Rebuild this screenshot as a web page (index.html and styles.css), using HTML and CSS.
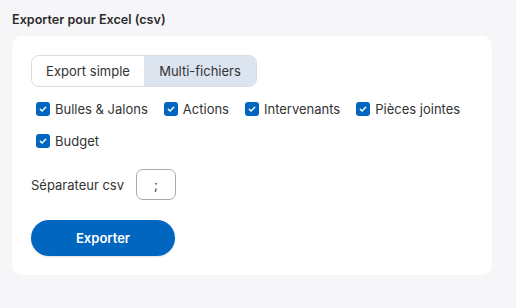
FILE: index.html
```html
<!DOCTYPE html>
<html lang="fr">
<head>
<meta charset="utf-8">
<link rel="stylesheet" href="styles.css">
</head>
<body>
<div class="page">
  <h2 class="title">Exporter pour Excel (csv)</h2>
  <div class="card">
    <div class="segmented">
      <button class="seg first">Export simple</button>
      <button class="seg active">Multi-fichiers</button>
    </div>
    <div class="checks">
      <label class="check"><span class="box"><svg viewBox="0 0 14 14" width="14" height="14"><path d="M4.3 7.2 L6.1 9 L9.7 5.2" fill="none" stroke="#fff" stroke-width="1.4" stroke-linecap="round" stroke-linejoin="round"/></svg></span>Bulles &amp; Jalons</label>
      <label class="check"><span class="box"><svg viewBox="0 0 14 14" width="14" height="14"><path d="M4.3 7.2 L6.1 9 L9.7 5.2" fill="none" stroke="#fff" stroke-width="1.4" stroke-linecap="round" stroke-linejoin="round"/></svg></span>Actions</label>
      <label class="check"><span class="box"><svg viewBox="0 0 14 14" width="14" height="14"><path d="M4.3 7.2 L6.1 9 L9.7 5.2" fill="none" stroke="#fff" stroke-width="1.4" stroke-linecap="round" stroke-linejoin="round"/></svg></span>Intervenants</label>
      <label class="check"><span class="box"><svg viewBox="0 0 14 14" width="14" height="14"><path d="M4.3 7.2 L6.1 9 L9.7 5.2" fill="none" stroke="#fff" stroke-width="1.4" stroke-linecap="round" stroke-linejoin="round"/></svg></span>Pièces jointes</label>
      <label class="check"><span class="box"><svg viewBox="0 0 14 14" width="14" height="14"><path d="M4.3 7.2 L6.1 9 L9.7 5.2" fill="none" stroke="#fff" stroke-width="1.4" stroke-linecap="round" stroke-linejoin="round"/></svg></span>Budget</label>
    </div>
    <div class="sep-row">
      <span class="sep-label">Séparateur csv</span>
      <span class="sep-input">;</span>
    </div>
    <button class="export">Exporter</button>
  </div>
</div>
</body>
</html>
```
FILE: styles.css
```css
* { box-sizing: border-box; }
html, body { margin: 0; padding: 0; }
body {
  background: #f6f6f8;
  font-family: Inter, "Noto Sans", sans-serif;
  color: #333;
  width: 516px;
  height: 308px;
  overflow: hidden;
}
.page { padding: 12px 24px 0 12px; }
.title {
  margin: 0 0 9px 0;
  font-size: 12.6px;
  font-weight: 600;
  line-height: 15px;
  color: #2b2b2b;
}
.card {
  width: 480px;
  height: 239px;
  background: #fff;
  border-radius: 10px;
  padding: 19px 19px;
}
.segmented {
  display: inline-flex;
  height: 32px;
  border: 1px solid #d9dde3;
  border-radius: 8px;
  overflow: hidden;
}
.seg {
  font-family: inherit;
  font-size: 13px;
  color: #333;
  background: #fff;
  border: none;
  padding: 0;
  margin: 0;
  height: 100%;
  text-align: center;
}
.seg.first { width: 112px; }
.seg.active { width: 112px; background: #dce4f0; }
.checks {
  display: flex;
  flex-wrap: wrap;
  column-gap: 16px;
  row-gap: 18px;
  margin-top: 15px;
  padding-left: 5px;
  width: 450px;
}
.check {
  display: flex;
  align-items: center;
  gap: 5px;
  font-size: 13px;
  line-height: 14px;
  color: #333;
}
.box {
  width: 14px;
  height: 14px;
  background: #0066c0;
  border-radius: 3px;
  display: inline-flex;
}
.sep-row {
  display: flex;
  align-items: center;
  gap: 12px;
  margin-top: 21px;
}
.sep-label { font-size: 13px; color: #333; }
.sep-input {
  width: 40px;
  height: 31px;
  border: 1px solid #a9a9a9;
  border-radius: 7px;
  display: flex;
  align-items: center;
  justify-content: center;
  font-size: 13px;
}
.export {
  display: block;
  margin-top: 20px;
  width: 144px;
  height: 36px;
  border: none;
  border-radius: 18px;
  background: #0066c0;
  color: #fff;
  font-family: inherit;
  font-size: 13px;
  font-weight: 600;
  box-shadow: 0 1px 2px rgba(0,0,0,0.12);
}
```
